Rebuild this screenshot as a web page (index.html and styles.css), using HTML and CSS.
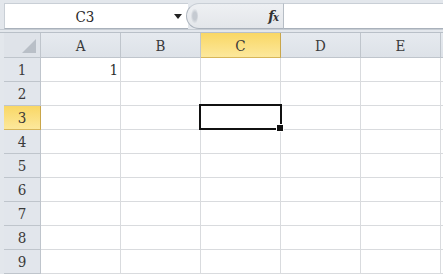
FILE: index.html
```html
<!DOCTYPE html>
<html>
<head>
<meta charset="utf-8">
<link rel="stylesheet" href="styles.css">
</head>
<body>
<div class="app">
  <div class="fbar">
    <div class="namebox">
      <span class="name">C3</span>
      <span class="arrow"></span>
    </div>
    <div class="fxzone">
      <span class="grip"></span>
      <span class="fx"><i>f</i><i class="x">x</i></span>
    </div>
    <div class="input"></div>
  </div>
  <div class="sheet">
    <div class="hdr corner"><span class="tri"></span></div>
    <div class="hdr col">A</div>
    <div class="hdr col">B</div>
    <div class="hdr col sel">C</div>
    <div class="hdr col">D</div>
    <div class="hdr col">E</div>
    <div class="hdr col rest"></div>

    <div class="hdr row">1</div><div class="cell num">1</div><div class="cell"></div><div class="cell"></div><div class="cell"></div><div class="cell"></div><div class="cell rest"></div>
    <div class="hdr row">2</div><div class="cell"></div><div class="cell"></div><div class="cell"></div><div class="cell"></div><div class="cell"></div><div class="cell rest"></div>
    <div class="hdr row sel">3</div><div class="cell"></div><div class="cell"></div><div class="cell active"><span class="box"></span><span class="handle"></span></div><div class="cell"></div><div class="cell"></div><div class="cell rest"></div>
    <div class="hdr row">4</div><div class="cell"></div><div class="cell"></div><div class="cell"></div><div class="cell"></div><div class="cell"></div><div class="cell rest"></div>
    <div class="hdr row">5</div><div class="cell"></div><div class="cell"></div><div class="cell"></div><div class="cell"></div><div class="cell"></div><div class="cell rest"></div>
    <div class="hdr row">6</div><div class="cell"></div><div class="cell"></div><div class="cell"></div><div class="cell"></div><div class="cell"></div><div class="cell rest"></div>
    <div class="hdr row">7</div><div class="cell"></div><div class="cell"></div><div class="cell"></div><div class="cell"></div><div class="cell"></div><div class="cell rest"></div>
    <div class="hdr row">8</div><div class="cell"></div><div class="cell"></div><div class="cell"></div><div class="cell"></div><div class="cell"></div><div class="cell rest"></div>
    <div class="hdr row">9</div><div class="cell"></div><div class="cell"></div><div class="cell"></div><div class="cell"></div><div class="cell"></div><div class="cell rest"></div>
    <div class="hdr row"></div><div class="cell"></div><div class="cell"></div><div class="cell"></div><div class="cell"></div><div class="cell"></div><div class="cell rest"></div>
  </div>
</div>
</body>
</html>
```
FILE: styles.css
```css
html, body {
  margin: 0;
  padding: 0;
  width: 443px;
  height: 274px;
  overflow: hidden;
  background: #e3e7ec;
}
.app {
  width: 443px;
  height: 274px;
  overflow: hidden;
  font-family: "DejaVu Serif", serif;
  font-stretch: condensed;
  color: #222;
}
.fbar {
  display: flex;
  height: 26px;
  padding: 3px 0 0 4px;
  border-bottom: 1px solid #c6ccd3;
  box-sizing: content-box;
  margin-bottom: 2px;
}
.fbar > div {
  border-bottom: 1px solid #a9b1bb;
  border-top: 1px solid #c9cfd6;
  box-sizing: border-box;
  height: 26px;
}
.namebox {
  width: 184px;
  background: #fff;
  display: flex;
  align-items: center;
  border-left: 1px solid #c9cfd6;
}
.name {
  font-family: "DejaVu Serif", serif;
  font-stretch: condensed;
  font-size: 15px;
  width: 160px;
  text-align: center;
  padding-top: 1px;
  margin-right: 6px;
  color: #2a2a2a;
}
.arrow {
  width: 0;
  height: 0;
  border-left: 4px solid transparent;
  border-right: 4px solid transparent;
  border-top: 5px solid #222;
  margin-left: 3px;
  margin-top: 1px;
}
.fxzone {
  width: 97px;
  background: linear-gradient(#eef0f3, #e3e6ea);
  border-radius: 13px 0 0 13px;
  border-left: 1px solid #aeb6bf;
  display: flex;
  align-items: center;
  margin-left: -2px;
}
.grip {
  width: 8px;
  height: 18px;
  margin-left: 3px;
  border-radius: 50%;
  background: radial-gradient(ellipse at 60% 50%, #c5cad1 0, #c5cad1 30%, transparent 60%);
}
.fx {
  margin-left: auto;
  margin-right: 5px;
  font-family: "DejaVu Serif", serif;
  font-size: 15px;
  font-weight: bold;
  color: #333;
  letter-spacing: -1px;
}
.fx .x {
  font-size: 11px;
}
.input {
  flex: 1;
  background: #fff;
  border-left: 1px solid #b6bdc5;
}
.sheet {
  display: grid;
  grid-template-columns: 37px 80px 80px 80px 80px 80px 1fr;
  grid-template-rows: 25px repeat(10, 24px);
  padding-left: 4px;
  border-top: 1px solid #b9c0c8;
}
.hdr {
  background: #e2e6ec;
  border-right: 1px solid #bfc5cc;
  border-bottom: 1px solid #bfc5cc;
  box-sizing: border-box;
  display: flex;
  align-items: center;
  justify-content: center;
  font-family: "DejaVu Serif", serif;
  font-stretch: condensed;
  font-size: 15px;
  color: #3a3a3a;
}
.hdr.col {
  background: linear-gradient(#e6eaef, #dde2e8);
  padding-top: 1px;
}
.hdr.row {
  padding-top: 1px;
}
.hdr.sel {
  background: linear-gradient(#f9d765, #fce89c);
  border-right-color: #c9a64a;
  border-bottom-color: #d7b65a;
}
.hdr.rest {
  border-right: none;
}
.corner {
  position: relative;
  background: #dfe3e9;
}
.tri {
  position: absolute;
  right: 4px;
  bottom: 4px;
  width: 0;
  height: 0;
  border-left: 14px solid transparent;
  border-bottom: 14px solid #b9bfc7;
}
.cell {
  border-right: 1px solid #d9dbde;
  border-bottom: 1px solid #d9dbde;
  box-sizing: border-box;
  background: #fff;
  font-family: "DejaVu Serif", serif;
  font-stretch: condensed;
  font-size: 15px;
  display: flex;
  align-items: center;
  color: #2a2a2a;
}
.cell.rest {
  border-right: none;
}
.cell.num {
  justify-content: flex-end;
  padding-right: 2px;
  padding-top: 1px;
}
.cell.active {
  position: relative;
}
.box {
  position: absolute;
  left: -2px;
  top: -2px;
  width: 83px;
  height: 26px;
  border: 2px solid #111;
  box-sizing: border-box;
}
.handle {
  position: absolute;
  right: -4px;
  bottom: -3px;
  width: 6px;
  height: 6px;
  background: #111;
  border: 1px solid #fff;
  box-sizing: content-box;
}
```
